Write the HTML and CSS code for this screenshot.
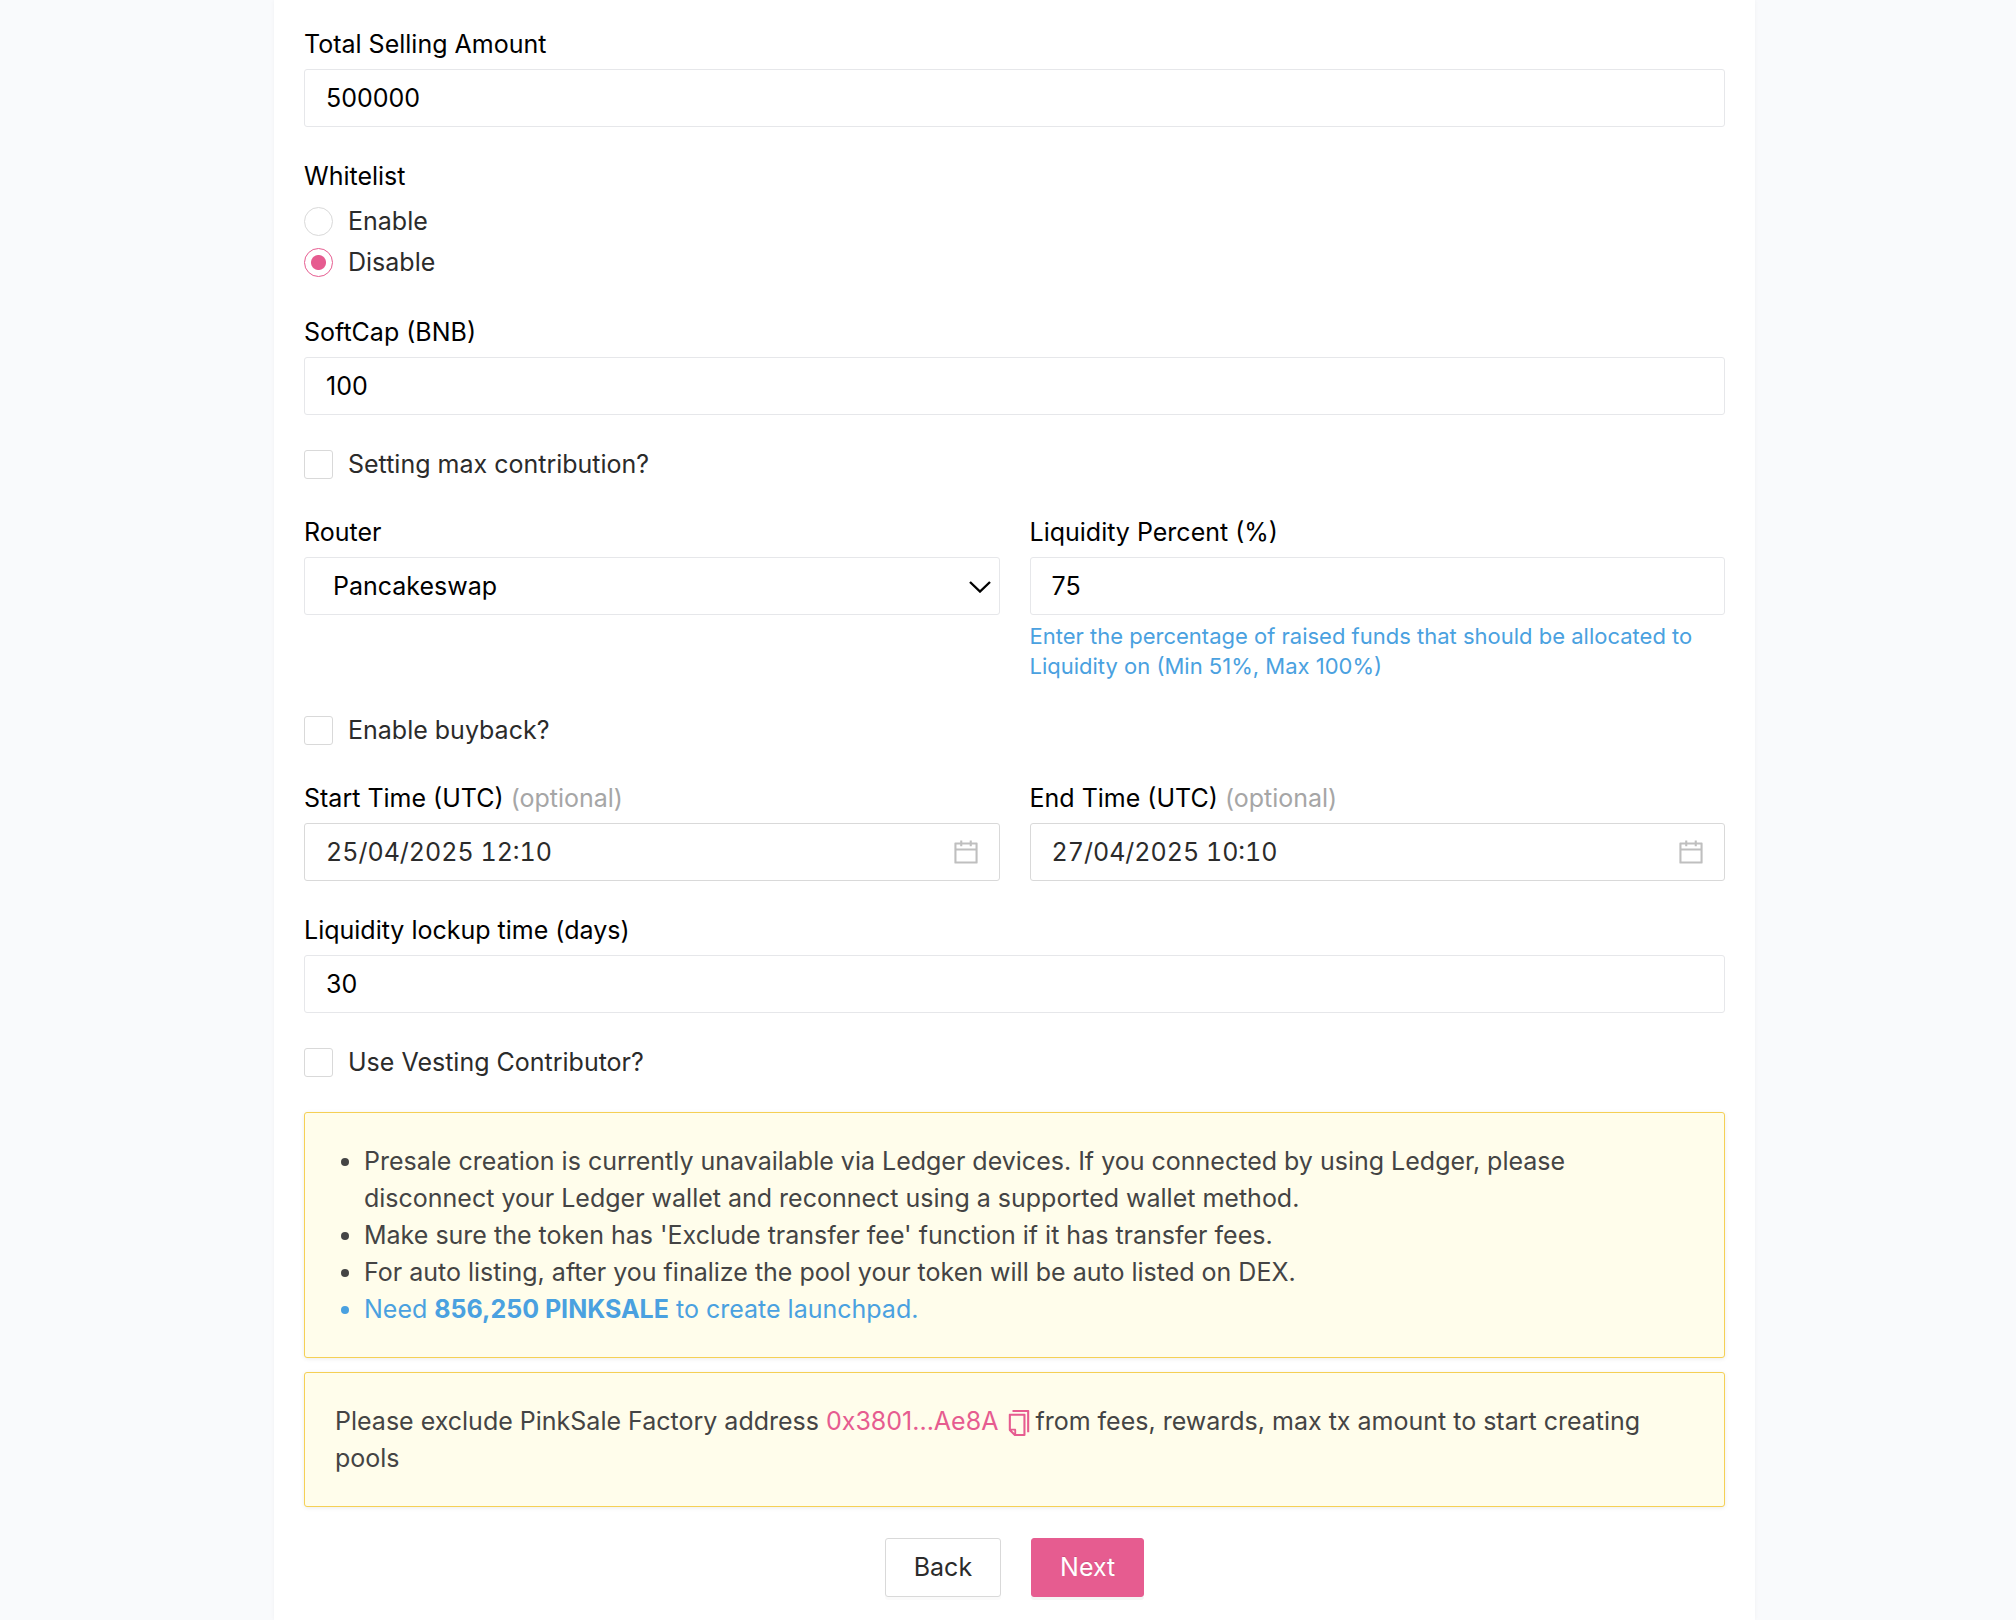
FILE: index.html
```html
<!DOCTYPE html>
<html lang="en">

<head>
    <meta charset="UTF-8">
    <meta name="viewport" content="width=device-width, initial-scale=1.0">
    <title>Create Launchpad</title>
    <link rel="stylesheet" href="styles.css">
</head>

<body>
    <main class="panel">
        <form class="form" onsubmit="return false">
            <div class="field">
                <label class="label" for="total">Total Selling Amount</label>
                <input class="input" type="text" id="total" value="500000">
            </div>

            <fieldset class="field radio-group">
                <legend class="label">Whitelist</legend>
                <label class="radio-row"><input class="radio" type="radio" name="whitelist" value="enable">Enable</label>
                <label class="radio-row"><input class="radio" type="radio" name="whitelist" value="disable" checked>Disable</label>
            </fieldset>

            <div class="field">
                <label class="label" for="softcap">SoftCap (BNB)</label>
                <input class="input" type="text" id="softcap" value="100">
            </div>

            <label class="check-row"><input class="checkbox" type="checkbox">Setting max contribution?</label>

            <div class="columns">
                <div class="field">
                    <label class="label" for="router">Router</label>
                    <div class="select-wrap">
                        <select class="input select" id="router">
                            <option>Pancakeswap</option>
                        </select>
                        <svg class="chevron" viewBox="0 0 22 12" aria-hidden="true">
                            <path d="M1 1l10 9.500L21 1" fill="none" stroke="currentColor" stroke-width="2.400" />
                        </svg>
                    </div>
                </div>
                <div class="field">
                    <label class="label" for="liquidity">Liquidity Percent (%)</label>
                    <input class="input" type="text" id="liquidity" value="75">
                    <p class="help">Enter the percentage of raised funds that should be allocated to Liquidity on (Min 51%, Max 100%)</p>
                </div>
            </div>

            <label class="check-row"><input class="checkbox" type="checkbox">Enable buyback?</label>

            <div class="columns">
                <div class="field">
                    <label class="label" for="start">Start Time (UTC) <span class="optional">(optional)</span></label>
                    <div class="picker">
                        <input class="picker-input" type="text" id="start" value="25/04/2025 12:10">
                        <svg class="calendar" viewBox="64 64 896 896" aria-hidden="true">
                            <path d="M880 184H712v-64c0-4.400-3.600-8-8-8h-56c-4.400 0-8 3.600-8 8v64H384v-64c0-4.400-3.600-8-8-8h-56c-4.400 0-8 3.600-8 8v64H144c-17.700 0-32 14.300-32 32v664c0 17.700 14.300 32 32 32h736c17.700 0 32-14.300 32-32V216c0-17.700-14.300-32-32-32zm-40 656H184V460h656v380zM184 392V256h128v48c0 4.400 3.600 8 8 8h56c4.400 0 8-3.600 8-8v-48h256v48c0 4.400 3.600 8 8 8h56c4.400 0 8-3.600 8-8v-48h128v136H184z" fill="currentColor" />
                        </svg>
                    </div>
                </div>
                <div class="field">
                    <label class="label" for="end">End Time (UTC) <span class="optional">(optional)</span></label>
                    <div class="picker">
                        <input class="picker-input" type="text" id="end" value="27/04/2025 10:10">
                        <svg class="calendar" viewBox="64 64 896 896" aria-hidden="true">
                            <path d="M880 184H712v-64c0-4.400-3.600-8-8-8h-56c-4.400 0-8 3.600-8 8v64H384v-64c0-4.400-3.600-8-8-8h-56c-4.400 0-8 3.600-8 8v64H144c-17.700 0-32 14.300-32 32v664c0 17.700 14.300 32 32 32h736c17.700 0 32-14.300 32-32V216c0-17.700-14.300-32-32-32zm-40 656H184V460h656v380zM184 392V256h128v48c0 4.400 3.600 8 8 8h56c4.400 0 8-3.600 8-8v-48h256v48c0 4.400 3.600 8 8 8h56c4.400 0 8-3.600 8-8v-48h128v136H184z" fill="currentColor" />
                        </svg>
                    </div>
                </div>
            </div>

            <div class="field">
                <label class="label" for="lockup">Liquidity lockup time (days)</label>
                <input class="input" type="text" id="lockup" value="30">
            </div>

            <label class="check-row"><input class="checkbox" type="checkbox">Use Vesting Contributor?</label>

            <div class="notices">
                <ul class="notice notice-list">
                    <li>Presale creation is currently unavailable via Ledger devices. If you connected by using Ledger, please disconnect your Ledger wallet and reconnect using a supported wallet method.</li>
                    <li>Make sure the token has 'Exclude transfer fee' function if it has transfer fees.</li>
                    <li>For auto listing, after you finalize the pool your token will be auto listed on DEX.</li>
                    <li class="info">Need <strong>856,250 PINKSALE</strong> to create launchpad.</li>
                </ul>
                <p class="notice">Please exclude PinkSale Factory address <a class="address" href="#">0x3801...Ae8A</a><button class="copy" type="button" aria-label="Copy"><svg viewBox="64 64 896 896" aria-hidden="true"><path d="M832 64H296c-4.400 0-8 3.600-8 8v56c0 4.400 3.600 8 8 8h496v688c0 4.400 3.600 8 8 8h56c4.400 0 8-3.600 8-8V96c0-17.700-14.300-32-32-32zM704 192H192c-17.700 0-32 14.300-32 32v530.700c0 8.500 3.400 16.600 9.400 22.600l173.300 173.300c2.200 2.200 4.700 4 7.400 5.500v1.900h4.200c3.500 1.300 7.200 2 11 2H704c17.700 0 32-14.300 32-32V224c0-17.700-14.300-32-32-32zM350 856.200L263.900 770H350v86.200zM664 888H414V746c0-22.100-17.900-40-40-40H232V264h432v624z" fill="currentColor" /></svg></button>from fees, rewards, max tx amount to start creating pools</p>
            </div>

            <div class="actions">
                <button class="btn" type="button">Back</button>
                <button class="btn btn-primary" type="submit">Next</button>
            </div>
        </form>
    </main>
</body>

</html>
```
FILE: styles.css
```css
* {
    box-sizing: border-box;
}

body {
    margin: 0;
    padding: 0 261px 0 274px;
    background-color: #f9fafc;
    color: #2b2b2b;
    font-family: Inter, "Liberation Sans", sans-serif;
    font-size: 25px;
    line-height: 37px;
}

input,
select,
button {
    font-family: inherit;
    font-size: inherit;
    line-height: inherit;
    color: inherit;
}

.panel {
    min-height: 100vh;
    padding: 26px 30px 23px;
    background-color: #fff;
    box-shadow: 0 0 4px rgba(0, 0, 0, 0.04);
}

.form {
    display: flex;
    flex-direction: column;
    gap: 31px;
}

.field {
    min-width: 0;
}

.label {
    display: block;
    margin-bottom: 7px;
    padding: 0;
    line-height: 36px;
    color: #000;
}

.optional {
    color: #a6a6a6;
}

.input {
    display: block;
    width: 100%;
    height: 58px;
    padding: 0 21px;
    border: 1px solid #e6e7ea;
    border-radius: 3px;
    background-color: #fff;
    color: #000;
}

.columns {
    display: grid;
    grid-template-columns: 1fr 1fr;
    gap: 30px;
}

/* Radio and checkbox */
.radio-group {
    margin: 0;
    padding: 0;
    border: 0;
}

.radio-row,
.check-row {
    display: flex;
    align-items: center;
    gap: 15px;
}

.radio-row {
    height: 41px;
}

.radio,
.checkbox {
    appearance: none;
    width: 29px;
    height: 29px;
    margin: 0;
    border: 1px solid #d9d9d9;
    background-color: #fff;
}

.radio {
    border-radius: 50%;
}

.radio:checked {
    border-color: #e65c90;
    background: radial-gradient(circle, #e65c90 7px, #fff 8px);
}

.checkbox {
    border-radius: 3px;
}

.checkbox:checked {
    border-color: #e65c90;
    background-color: #e65c90;
}

/* Router */
.select-wrap {
    position: relative;
}

.select {
    appearance: none;
    padding: 0 40px 0 28px;
}

.chevron {
    position: absolute;
    top: 24px;
    right: 9px;
    width: 22px;
    height: 12px;
    color: #000;
    pointer-events: none;
}

.help {
    margin: 6px 0 0;
    font-size: 22px;
    line-height: 30px;
    color: #4aa1e0;
}

/* Date picker */
.picker {
    display: flex;
    align-items: center;
    height: 58px;
    padding: 0 20px 0 21px;
    border: 1px solid #d9d9d9;
    border-radius: 3px;
}

.picker-input {
    flex: 1;
    min-width: 0;
    padding: 0;
    border: 0;
    outline: 0;
    background: none;
    font-variant-numeric: tabular-nums;
}

.calendar {
    width: 26px;
    height: 26px;
    color: #bfbfbf;
}

/* Notices */
.notices {
    display: grid;
    gap: 14px;
}

.notice {
    margin: 0;
    padding: 30px 30px 29px;
    border: 1px solid #f5d055;
    border-radius: 3px;
    background-color: #fffdeb;
    box-shadow: 0 1px 4px rgba(0, 0, 0, 0.08);
    color: #444;
}

.notice-list {
    padding-left: 59px;
}

.info {
    color: #4aa1e0;
}

.address {
    color: #e65c90;
    text-decoration: none;
}

.copy {
    margin: 0 3px 0 8px;
    padding: 0;
    border: 0;
    background: none;
    color: #e65c90;
    line-height: 1;
    cursor: pointer;
    vertical-align: middle;
}

.copy svg {
    display: block;
    width: 26px;
    height: 26px;
}

.actions {
    display: flex;
    justify-content: center;
    gap: 30px;
}

.btn {
    height: 59px;
    padding: 0 28px;
    border: 1px solid #d9d9d9;
    border-radius: 3px;
    background-color: #fff;
    box-shadow: 0 3px 0 rgba(0, 0, 0, 0.02);
    cursor: pointer;
}

.btn-primary {
    border-color: #e65c90;
    background-color: #e65c90;
    box-shadow: 0 3px 0 rgba(0, 0, 0, 0.04);
    color: #fff;
    text-shadow: 0 -1px 0 rgba(0, 0, 0, 0.12);
}
```
